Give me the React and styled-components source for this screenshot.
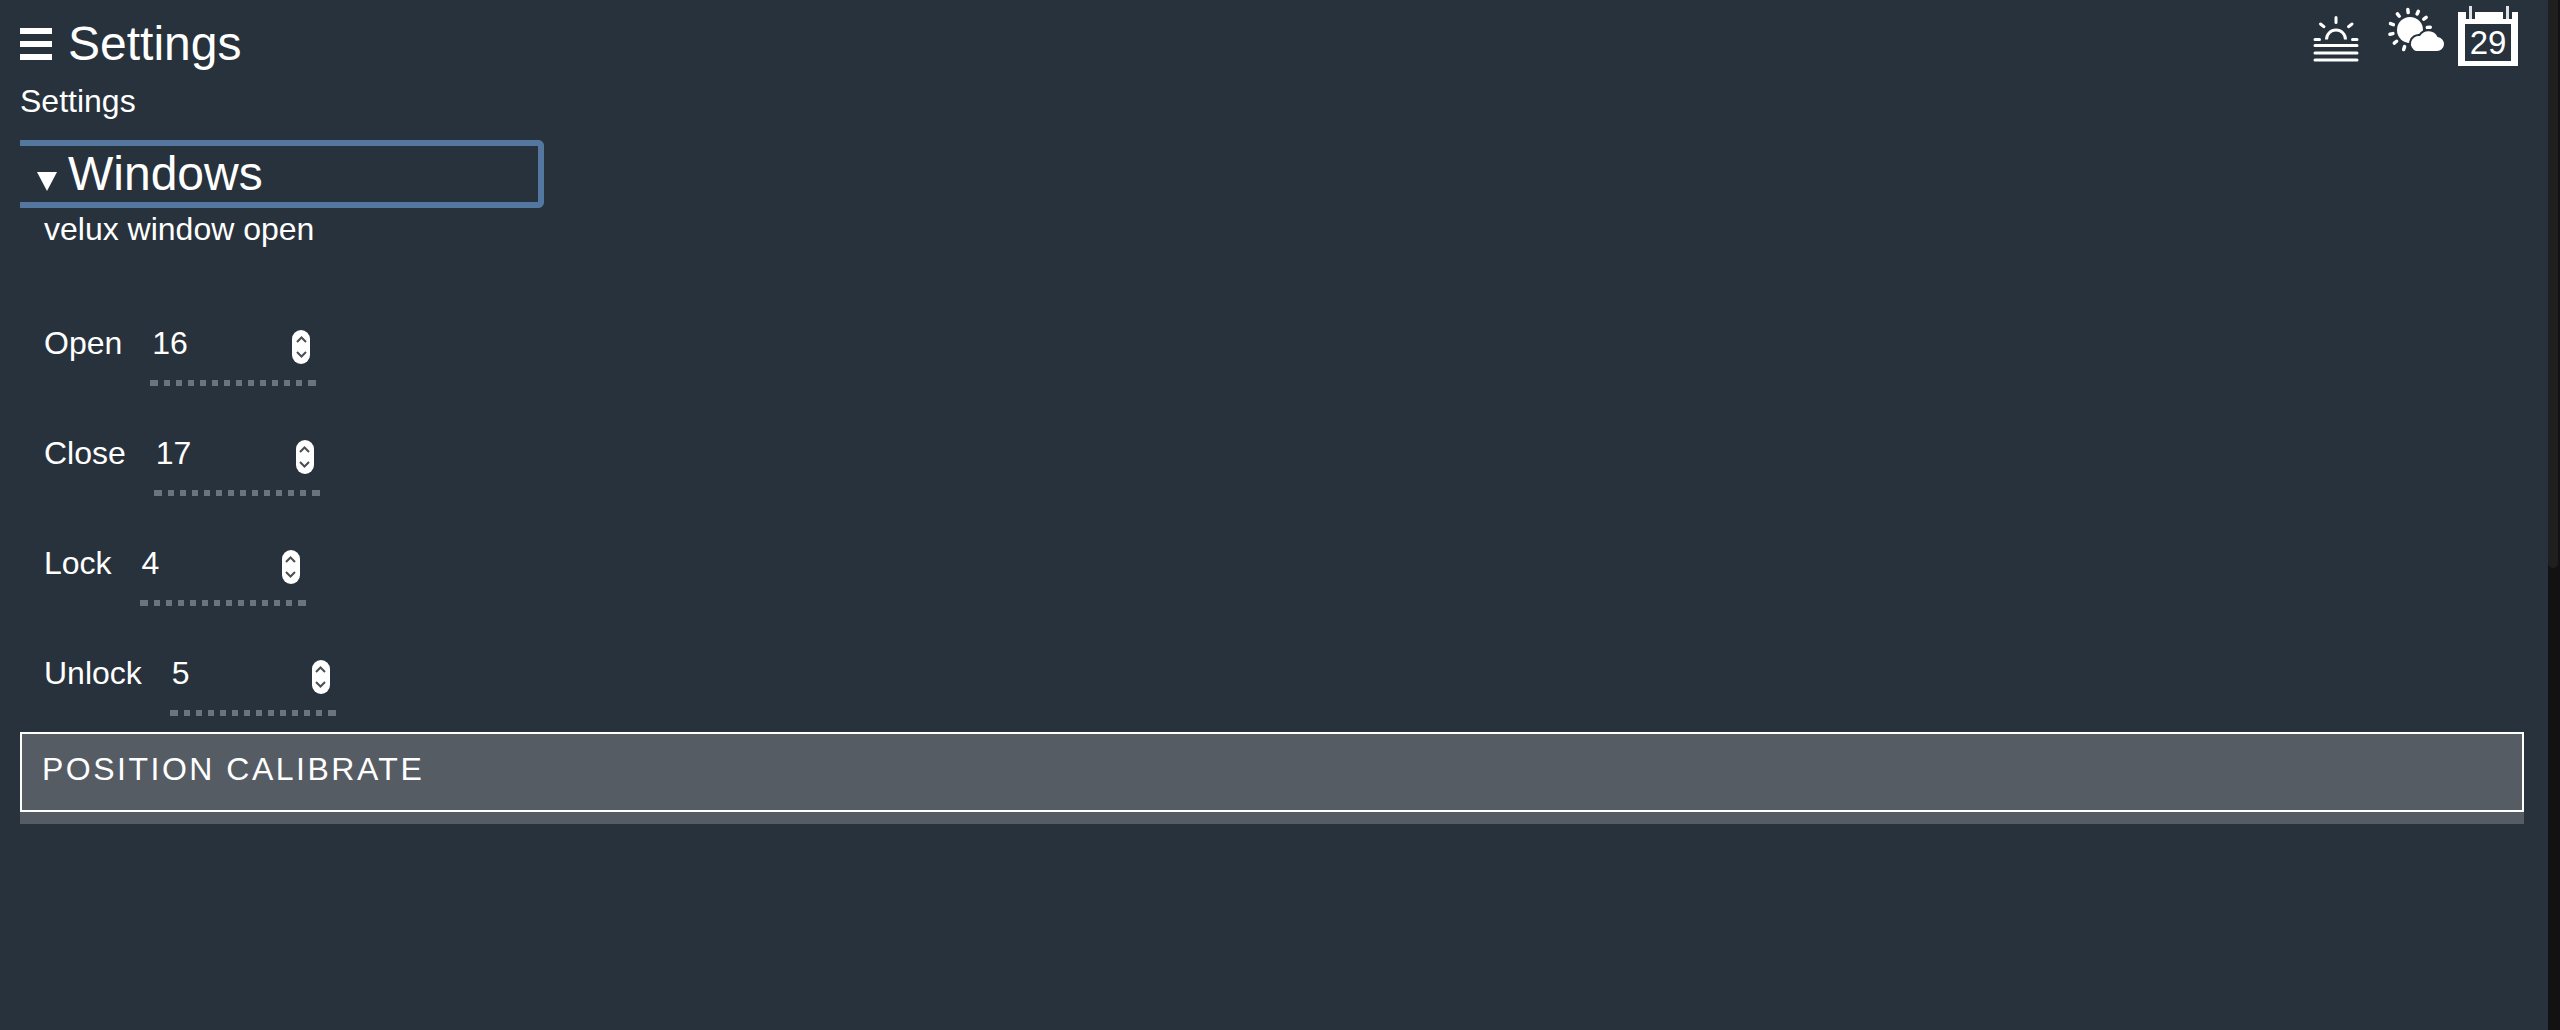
import React from 'react';
import styled, { createGlobalStyle } from 'styled-components';

const GlobalStyle = createGlobalStyle`
  html, body {
    margin: 0;
    padding: 0;
    background: #28323c;
  }
  * {
    box-sizing: border-box;
  }
`;

const Page = styled.div`
  display: flex;
  height: 100vh;
  overflow: hidden;
  background: #28323c;
  color: #fff;
  font-family: "Liberation Sans", Arial, sans-serif;
`;

const Main = styled.main`
  flex: 1;
  min-width: 0;
`;

const Scrollbar = styled.div`
  flex: 0 0 12px;
  background: #121212;
`;

const ScrollThumb = styled.div`
  width: 10px;
  height: 568px;
  background: #1f1f1f;
  border-radius: 0 0 5px 5px;
`;

const TopBar = styled.header`
  display: flex;
  justify-content: space-between;
  height: 84px;
  padding: 6px 30px 0 20px;
`;

const TitleGroup = styled.div`
  display: flex;
  align-items: center;
  gap: 16px;
  height: 52px;
  margin-top: 12px;
`;

const Hamburger = styled.div`
  display: flex;
  flex-direction: column;
  justify-content: space-between;
  width: 32px;
  height: 32px;
`;

const HamburgerBar = styled.span`
  display: block;
  height: 6px;
  background: #fff;
`;

const Title = styled.h1`
  margin: 0;
  font-size: 48px;
  font-weight: 400;
  line-height: 52px;
`;

const Icons = styled.div`
  display: flex;
  align-items: flex-start;
`;

const WeatherIcon = styled.svg`
  display: block;
  flex: none;
  width: ${(p) => p.$w}px;
  height: ${(p) => p.$h}px;
  margin-top: ${(p) => p.$top}px;
  margin-right: ${(p) => p.$right}px;
  overflow: visible;
`;

const Calendar = styled.div`
  position: relative;
  display: flex;
  align-items: center;
  justify-content: center;
  width: 60px;
  height: 54px;
  margin-top: 6px;
  border: solid #fff;
  border-width: 12px 7px 5px;
  font-size: 33px;
  line-height: 37px;
`;

const CalendarPin = styled.span`
  position: absolute;
  top: -18px;
  left: ${(p) => p.$left}px;
  width: 3px;
  height: 13px;
  background: #dfe1e3;
  box-shadow: 0 0 0 3px #28323c;
  clip-path: inset(-3px -3px 0 -3px);
`;

const Breadcrumb = styled.div`
  padding-left: 20px;
  font-size: 32px;
  line-height: 34px;
`;

const SectionHead = styled.div`
  display: flex;
  align-items: center;
  gap: 10px;
  width: 524px;
  height: 68px;
  margin: 22px 0 0 20px;
  padding-left: 17px;
  border: 6px solid #54779f;
  border-left: 0;
  border-radius: 0 6px 6px 0;
`;

const Caret = styled.span`
  align-self: flex-end;
  width: 0;
  height: 0;
  margin-bottom: 11px;
  border-style: solid;
  border-width: 19px 10.5px 0;
  border-color: #fff transparent transparent;
`;

const SectionTitle = styled.h2`
  margin: 0 0 0 1px;
  font-size: 48px;
  font-weight: 400;
  line-height: 54px;
`;

const Body = styled.section`
  padding-left: 44px;
  font-size: 32px;
  line-height: 34px;
`;

const Description = styled.p`
  margin: 4px 0 80px;
  font-size: 32px;
  line-height: 34px;
`;

const Fields = styled.div`
  display: flex;
  flex-direction: column;
  gap: 34px;
`;

const FieldRow = styled.div`
  display: flex;
  align-items: flex-start;
  gap: 28px;
  height: 76px;
`;

const NumberBox = styled.div`
  position: relative;
  display: flex;
  flex-direction: column;
  justify-content: space-between;
  width: 166px;
  height: 60px;
`;

const NumberValue = styled.span`
  padding-left: 2px;
`;

const DottedLine = styled.span`
  display: block;
  height: 6px;
  background:
    linear-gradient(#6b737c, #6b737c) right / 8px 6px no-repeat,
    repeating-linear-gradient(90deg, #6b737c 0 6px, transparent 6px 12px) 2px 0 / 100% 6px no-repeat,
    linear-gradient(#6b737c, #6b737c) left / 7px 6px no-repeat;
`;

const Spinner = styled.span`
  position: absolute;
  top: 4px;
  right: 6px;
  display: flex;
  flex-direction: column;
  align-items: center;
  justify-content: space-between;
  width: 18px;
  height: 34px;
  padding: 6px 0;
  background: #fff;
  border-radius: 9px;
`;

const Chevron = styled.svg`
  display: block;
  width: 11px;
  height: 7px;
  fill: none;
  stroke: #4a4f55;
  stroke-width: 2;
`;

const ActionWrap = styled.div`
  margin: 0 24px 0 20px;
  padding-bottom: 12px;
  background: #555c64;
`;

const ActionButton = styled.button`
  display: block;
  width: 100%;
  height: 80px;
  padding: 0 0 6px 20px;
  background: #555c64;
  border: 2px solid #fff;
  color: #fff;
  font-family: inherit;
  font-size: 32px;
  letter-spacing: 2.5px;
  text-align: left;
  text-transform: uppercase;
`;

const fields = [
  { label: 'Open', value: 16 },
  { label: 'Close', value: 17 },
  { label: 'Lock', value: 4 },
  { label: 'Unlock', value: 5 },
];

// sun rays of the weather icon, angle in degrees
const rayAngles = [-128, -96, -66, -38, -8, 168, 198, 140, 108];

const SunriseIcon = () => (
  <WeatherIcon $w={46} $h={48} $top={9} $right={30} viewBox="13 14 46 48" fill="none" stroke="#fff" strokeWidth="3" strokeLinecap="round">
    <path d="M26.500 38.500a9.500 9.500 0 0 1 19 0" strokeLinecap="butt" />
    <path d="M36 16.500v5M20.500 23l3.500 2.700M52 23l-3.500 2.700M15 38.500h4.500M52.500 38.500h4.500M15 44.500h42M15 52h42M15 59h42" />
  </WeatherIcon>
);

const SunCloudIcon = () => (
  <WeatherIcon $w={54} $h={42} $top={4} $right={15} viewBox="109 10 54 42">
    <circle cx="130" cy="30" r="13" fill="#fff" />
    <g stroke="#fff" strokeWidth="3.5" strokeLinecap="round">
      {rayAngles.map((a) => (
        <line
          key={a}
          x1={130 + 17.5 * Math.cos((a * Math.PI) / 180)}
          y1={30 + 17.5 * Math.sin((a * Math.PI) / 180)}
          x2={130 + 20.5 * Math.cos((a * Math.PI) / 180)}
          y2={30 + 20.5 * Math.sin((a * Math.PI) / 180)}
        />
      ))}
    </g>
    <path
      d="M136 51H156.500A7 7 0 0 0 157.500 37A10 10 0 0 0 140 36A7.800 7.800 0 0 0 136 51Z"
      fill="#fff"
      stroke="#28323c"
      strokeWidth="4"
      paintOrder="stroke"
    />
  </WeatherIcon>
);

export default function App() {
  return (
    <Page>
      <GlobalStyle />
      <Main>
        <TopBar>
          <TitleGroup>
            <Hamburger>
              <HamburgerBar />
              <HamburgerBar />
              <HamburgerBar />
            </Hamburger>
            <Title>Settings</Title>
          </TitleGroup>
          <Icons>
            <SunriseIcon />
            <SunCloudIcon />
            <Calendar>
              <CalendarPin $left={4} />
              <CalendarPin $left={41} />
              29
            </Calendar>
          </Icons>
        </TopBar>
        <Breadcrumb>Settings</Breadcrumb>
        <SectionHead>
          <Caret />
          <SectionTitle>Windows</SectionTitle>
        </SectionHead>
        <Body>
          <Description>velux window open</Description>
          <Fields>
            {fields.map((f) => (
              <FieldRow key={f.label}>
                <span>{f.label}</span>
                <NumberBox>
                  <NumberValue>{f.value}</NumberValue>
                  <Spinner>
                    <Chevron viewBox="0 0 11 7"><path d="M1 6l4.500-4.500L10 6" /></Chevron>
                    <Chevron viewBox="0 0 11 7"><path d="M1 1l4.500 4.500L10 1" /></Chevron>
                  </Spinner>
                  <DottedLine />
                </NumberBox>
              </FieldRow>
            ))}
          </Fields>
        </Body>
        <ActionWrap>
          <ActionButton>Position Calibrate</ActionButton>
        </ActionWrap>
      </Main>
      <Scrollbar>
        <ScrollThumb />
      </Scrollbar>
    </Page>
  );
}
